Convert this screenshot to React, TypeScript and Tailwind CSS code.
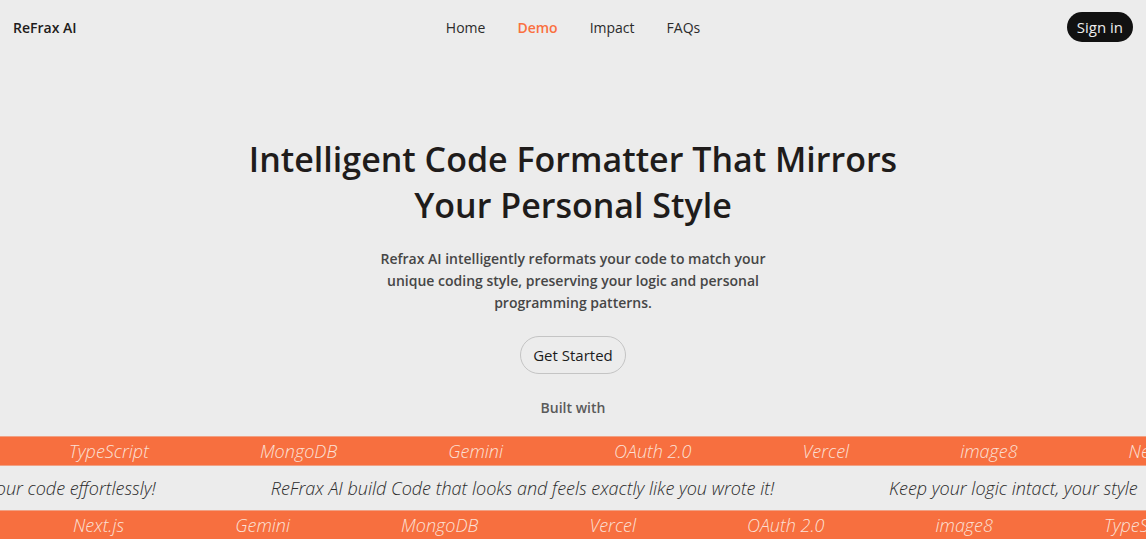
const links = ["Home", "Demo", "Impact", "FAQs"];

const firstRow = ["TypeScript", "MongoDB", "Gemini", "OAuth 2.0", "Vercel", "image8", "Next.js"];
const secondRow = ["Next.js", "Gemini", "MongoDB", "Vercel", "OAuth 2.0", "image8", "TypeScript"];
const phrases = [
  "your code effortlessly!",
  "ReFrax AI build Code that looks and feels exactly like you wrote it!",
  "Keep your logic intact, your style",
];

function Ticker({ items, track, className }: { items: string[]; track: string; className: string }) {
  return (
    <div className={`overflow-hidden text-lg leading-7 font-light whitespace-nowrap italic ${className}`}>
      <ul className={`flex ${track}`}>
        {items.map((item) => (
          <li key={item} className="shrink-0">
            {item}
          </li>
        ))}
      </ul>
    </div>
  );
}

export default function App() {
  return (
    <div className="h-screen overflow-hidden bg-[#ececec] font-['Open_Sans','Noto_Sans',sans-serif] text-[#1f1c1b]">
      <header className="grid grid-cols-[1fr_auto_1fr] items-center px-[13px] pt-3">
        <a href="#" className="pt-[2px] text-sm leading-6 font-semibold">
          ReFrax AI
        </a>
        <nav className="flex gap-8 pt-[2px] text-sm leading-6 text-[#2b2b2b]">
          {links.map((link) => (
            <a key={link} href={`#${link}`} className={link === "Demo" ? "font-semibold text-[#fa7040]" : ""}>
              {link}
            </a>
          ))}
        </nav>
        <button className="justify-self-end rounded-full bg-[#111111] px-[10px] py-[3px] text-[15px] leading-6 text-[#ededed]">
          Sign in
        </button>
      </header>

      <main>
        <section className="flex flex-col items-center pt-[94px] text-center">
          <h1 className="max-w-[720px] text-[34px] leading-[46px] font-semibold">
            Intelligent Code Formatter That Mirrors Your Personal Style
          </h1>
          <p className="mt-5 max-w-[410px] text-sm leading-[22px] font-semibold text-[#464646]">
            Refrax AI intelligently reformats your code to match your unique coding style, preserving your logic and
            personal programming patterns.
          </p>
          <button className="mt-[22px] rounded-full border border-[#c4c4c4] px-3 py-[6px] text-[15px] leading-6 text-[#1c1c1c]">
            Get Started
          </button>
          <h2 className="mt-[22px] text-sm leading-6 font-semibold text-[#5a5a5a]">Built with</h2>
        </section>

        <section className="mt-4">
          <Ticker items={firstRow} track="ml-[69px] gap-[111px]" className="border-y border-[#f0a184] bg-[#f76f3f] text-[#fbe0d6]" />
          <Ticker items={phrases} track="-ml-3 gap-[115px]" className="py-2 text-[#2b2b2b]" />
          <Ticker items={secondRow} track="ml-[73px] gap-[111px]" className="border-y border-[#f0a184] bg-[#f76f3f] text-[#fbe0d6]" />
        </section>
      </main>
    </div>
  );
}
